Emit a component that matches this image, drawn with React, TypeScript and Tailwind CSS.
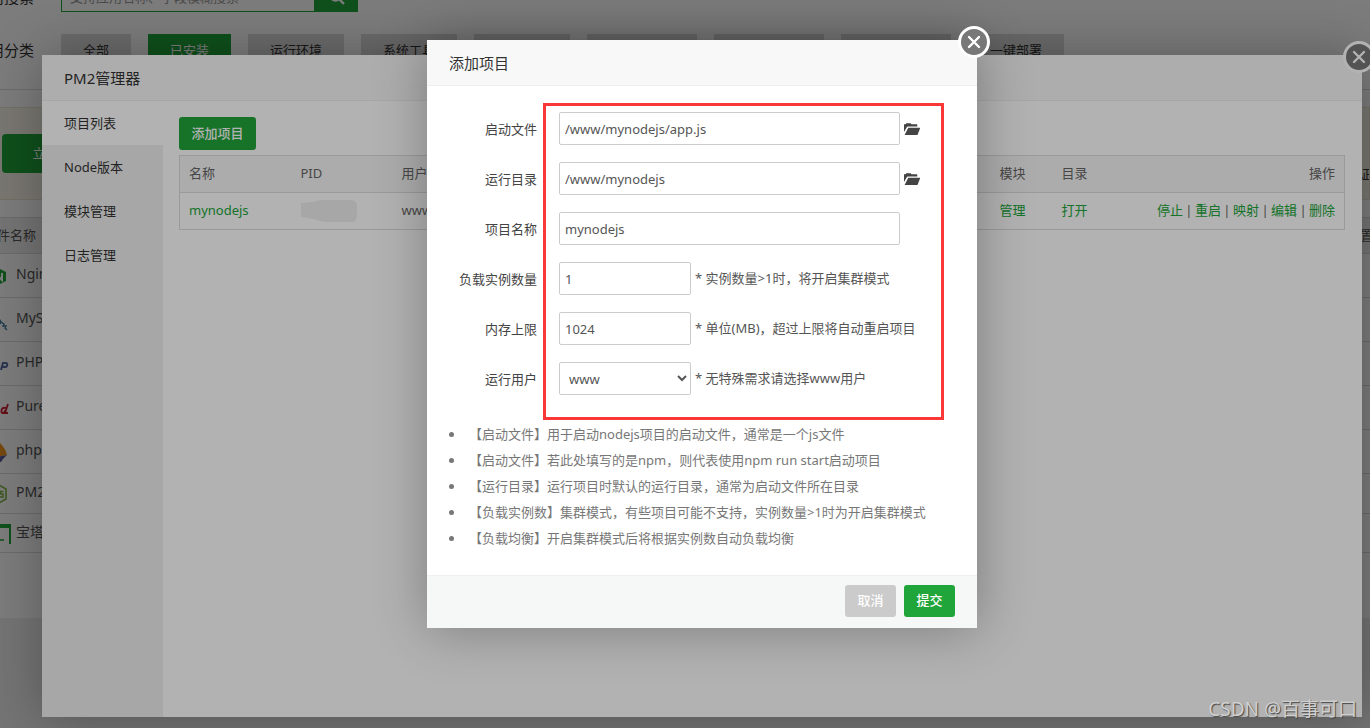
import type { ReactNode } from "react";

const categories = [
  { name: "全部" },
  { name: "已安装", active: true },
  { name: "运行环境" },
  { name: "系统工具" },
  { name: "宝塔插件" },
  { name: "专业版插件", wide: true },
  { name: "企业版插件", wide: true },
  { name: "第三方应用", wide: true },
  { name: "一键部署" },
];

const menus = ["项目列表", "Node版本", "模块管理", "日志管理"];

const actions = ["停止", "重启", "映射", "编辑", "删除"];

const tips = [
  "【启动文件】用于启动nodejs项目的启动文件，通常是一个js文件",
  "【启动文件】若此处填写的是npm，则代表使用npm run start启动项目",
  "【运行目录】运行项目时默认的运行目录，通常为启动文件所在目录",
  "【负载实例数】集群模式，有些项目可能不支持，实例数量>1时为开启集群模式",
  "【负载均衡】开启集群模式后将根据实例数自动负载均衡",
];

const software: { name: string; height: string; icon: ReactNode }[] = [
  {
    name: "Nginx",
    height: "h-11",
    icon: (
      <>
        <path d="M14 7l8 4v9l-8 4-8-4v-9z" fill="#20a53a" />
        <path d="M11 19v-7l7 7v-7" fill="none" stroke="#fff" strokeWidth="2" />
      </>
    ),
  },
  {
    name: "MySQL",
    height: "h-11",
    icon: (
      <path d="M4 8c6 0 10 3 13 9l3 2-1 2 3 0-1 2 2 2M17 17l-1 2" fill="none" stroke="#3e7a9b" strokeWidth="1.3" />
    ),
  },
  {
    name: "PHP",
    height: "h-11",
    icon: (
      <path
        d="M8 21l2-7h3c2 0 2 4-1 4H9M17 21l2-7h3c2 0 1.500 4-1 4h-3"
        fill="none"
        stroke="#5a6fa5"
        strokeWidth="2"
      />
    ),
  },
  {
    name: "Pure-Ftpd",
    height: "h-11",
    icon: (
      <path
        d="M24 11l-3 9h3M22 15c-3-1-5 1-4.500 4 1 2 3 1 4-2M14 15l-2 6"
        fill="none"
        stroke="#d02030"
        strokeWidth="1.800"
      />
    ),
  },
  {
    name: "phpMyAdmin",
    height: "h-11",
    icon: (
      <>
        <path d="M16 6c3 3 6 7 7 12l-12 2z" fill="#f0961e" />
        <path d="M6 21l17-3-4 4-2 3H9z" fill="#5a5f9a" />
      </>
    ),
  },
  {
    name: "PM2管理器",
    height: "h-10",
    icon: (
      <>
        <path d="M15 6l7 4v10l-7 4-7-4V10z" fill="none" stroke="#7cb342" strokeWidth="1.600" />
        <path d="M19.500 12.500h-3v2.500h2.500v3h-3.500" fill="none" stroke="#7cb342" strokeWidth="1.500" />
      </>
    ),
  },
  {
    name: "宝塔SSL",
    height: "h-[39px]",
    icon: (
      <>
        <path d="M4 5h23v20h-2V9H4z" fill="#20a53a" />
        <path d="M12 21h8" stroke="#20a53a" strokeWidth="1.500" />
      </>
    ),
  },
];

function CloseButton() {
  return (
    <button
      type="button"
      aria-label="关闭"
      className="absolute -top-[14px] -right-[13px] flex size-8 items-center justify-center rounded-full border-3 border-white bg-[#787878]"
    >
      <svg viewBox="0 0 14 14" className="size-[14px]" fill="none" stroke="#fff" strokeWidth="2.4" strokeLinecap="round">
        <path d="M2 2l10 10M12 2L2 12" />
      </svg>
    </button>
  );
}

function FolderButton({ label }: { label: string }) {
  return (
    <button type="button" aria-label={label} className="ml-1">
      <svg viewBox="0 0 16 12" className="h-3 w-4" fill="#444">
        <path d="M0 9V1.200h1.600L2.200.2h4.600l.6 1h5.300c.4 0 .6.3.6.7V3.600H4.200c-.8 0-1.400.4-1.700 1.100z" />
        <path d="M4.300 4.700h11.200c.5 0 .6.3.5.7l-2.300 6c-.1.4-.4.600-.8.600H.600z" />
      </svg>
    </button>
  );
}

function Field({ id, label, children }: { id: string; label: string; children: ReactNode }) {
  return (
    <div className="flex h-[33px] items-center">
      <label htmlFor={id} className="mr-[22px] w-[110px] pt-0.5 text-right text-[#444]">
        {label}
      </label>
      {children}
    </div>
  );
}

function StorePage() {
  return (
    <div className="-ml-[26px] w-[calc(100%+46px)] bg-white pb-[65px]">
      <div className="-mt-[18px] flex h-[30px] items-center">
        <label htmlFor="search" className="w-[87px] text-[15px]">应用搜索</label>
        <input
          id="search"
          placeholder="支持应用名称、字段模糊搜索"
          className="h-[30px] w-[254px] border border-[#20a53a] pl-2 placeholder:text-[#999]"
        />
        <button type="button" aria-label="搜索" className="flex h-[30px] w-[43px] items-center justify-center bg-[#20a53a]">
          <svg viewBox="0 0 16 16" className="size-4" fill="none" stroke="#fff" strokeWidth="2.400">
            <circle cx="6.500" cy="6.500" r="5" />
            <path d="M10 10l5 5" />
          </svg>
        </button>
      </div>
      <div className="mt-[22px] flex h-[56px] items-start border-b border-[#ddd]">
        <span className="w-[87px] text-[15px] leading-[33px]">应用分类</span>
        <div className="flex gap-[17px]">
          {categories.map((item) => (
            <button
              type="button"
              key={item.name}
              className={`h-[33px] ${item.wide ? "w-[110px]" : "px-[22px]"} ${
                item.active ? "bg-[#20a53a] text-white" : "bg-[#dcdcdc]"
              }`}
            >
              {item.name}
            </button>
          ))}
        </div>
      </div>
      <div className="mt-[17px] mr-5 flex h-[93px] items-center justify-between border border-[#eee6d2] bg-[#f9f5e8] pl-[27px]">
        <button type="button" className="h-[39px] w-[152px] rounded bg-[#20a53a] text-white">
          立即升级专业版
        </button>
        <span className="mt-[43px] w-[11px] overflow-hidden whitespace-nowrap">证</span>
      </div>
      <table className="mt-[17px] w-full border border-[#ddd]">
        <thead>
          <tr className="h-9 border-b border-[#ddd] bg-[#f0f0f0] text-left text-[#555]">
            <th className="pl-[9px] font-normal">软件名称</th>
            <th className="w-[42px] font-normal">位置</th>
          </tr>
        </thead>
        <tbody>
          {software.map((item) => (
            <tr key={item.name} className={`${item.height} border-b border-[#ddd]`}>
              <td className="pb-[3px] pl-[9px]">
                <div className="flex items-center gap-[6px] text-sm text-[#555]">
                  <svg viewBox="0 0 26 26" className="size-[26px] overflow-visible">{item.icon}</svg>
                  {item.name}
                </div>
              </td>
              <td />
            </tr>
          ))}
        </tbody>
      </table>
    </div>
  );
}

function ManagerWindow() {
  return (
    <section className="relative flex h-[662px] w-[1320px] shrink-0 flex-col bg-white shadow-[1px_1px_50px_rgba(0,0,0,0.3)]">
      <h2 className="h-[46px] shrink-0 border-b border-[#eee] bg-[#f8f8f8] pl-[22px] text-[15px] leading-[46px]">
        PM2管理器
      </h2>
      <div className="flex flex-1">
        <nav className="w-[121px] bg-[#f0f0f0]">
          {menus.map((menu, index) => (
            <a
              key={menu}
              href="#"
              className={`block h-11 pl-[22px] leading-[44px] ${index === 0 ? "bg-white" : ""}`}
            >
              {menu}
            </a>
          ))}
        </nav>
        <div className="flex-1 pt-4 pr-[17px] pl-4">
          <button type="button" className="h-[33px] w-[77px] rounded-[3px] bg-[#20a53a] font-medium text-white">
            添加项目
          </button>
          <table className="mt-[5px] w-full table-fixed border border-[#ddd] text-left text-[#666]">
            <thead>
              <tr className="h-[37px] border-b border-[#ddd] bg-[#f6f6f6]">
                <th className="w-[111px] pl-[9px] font-normal">名称</th>
                <th className="w-[101px] pl-[10px] font-normal">PID</th>
                <th className="pl-[10px] font-normal">用户</th>
                <th className="w-[62px] pl-[10px] font-normal">模块</th>
                <th className="w-[62px] pl-[10px] font-normal">目录</th>
                <th className="w-[231px] pr-[9px] text-right font-normal">操作</th>
              </tr>
            </thead>
            <tbody>
              <tr className="h-[37px]">
                <td className="pl-[9px]">
                  <a href="#" className="text-[#20a53a]">mynodejs</a>
                </td>
                <td className="pl-[9px]">
                  <svg viewBox="0 0 58 24" className="h-6 w-[58px]" fill="#f0f0f0">
                    <path d="M1 4l12-1 8-2h31q5 1 5 5v12q-1 5-5 5l-27 0-12-3-12-2z" />
                  </svg>
                </td>
                <td className="pl-[10px]">www</td>
                <td className="pl-[10px]">
                  <a href="#" className="text-[#20a53a]">管理</a>
                </td>
                <td className="pl-[10px]">
                  <a href="#" className="text-[#20a53a]">打开</a>
                </td>
                <td className="pr-[9px]">
                  <div className="flex justify-end">
                    {actions.map((action, index) => (
                      <span key={action} className="flex">
                        {index > 0 && <span className="w-3 text-center">|</span>}
                        <a href="#" className="text-[#20a53a]">{action}</a>
                      </span>
                    ))}
                  </div>
                </td>
              </tr>
            </tbody>
          </table>
        </div>
      </div>
      <CloseButton />
    </section>
  );
}

function AddProjectDialog() {
  const inputClass = "h-[33px] rounded-[2px] border border-[#ccc] bg-white pl-[5px] text-[#555]";

  return (
    <form className="relative w-[550px] shrink-0 bg-white shadow-[1px_1px_50px_rgba(0,0,0,0.3)]">
      <h2 className="h-[46px] border-b border-[#eee] bg-[#f8f8f8] pl-[22px] text-[15px] leading-[46px]">
        添加项目
      </h2>
      <div className="flex flex-col gap-[17px] pt-[26px] text-[#555]">
        <Field id="script" label="启动文件">
          <input id="script" defaultValue="/www/mynodejs/app.js" className={`${inputClass} w-[341px]`} />
          <FolderButton label="选择启动文件" />
        </Field>
        <Field id="path" label="运行目录">
          <input id="path" defaultValue="/www/mynodejs" className={`${inputClass} w-[341px]`} />
          <FolderButton label="选择运行目录" />
        </Field>
        <Field id="name" label="项目名称">
          <input id="name" defaultValue="mynodejs" className={`${inputClass} w-[341px]`} />
        </Field>
        <Field id="count" label="负载实例数量">
          <input id="count" defaultValue="1" className={`${inputClass} w-[132px]`} />
          <span className="ml-1">* 实例数量&gt;1时，将开启集群模式</span>
        </Field>
        <Field id="memory" label="内存上限">
          <input id="memory" defaultValue="1024" className={`${inputClass} w-[132px]`} />
          <span className="ml-1">* 单位(MB)，超过上限将自动重启项目</span>
        </Field>
        <Field id="user" label="运行用户">
          <select id="user" className={`${inputClass} w-[132px]`}>
            <option>www</option>
            <option>root</option>
          </select>
          <span className="ml-1">* 无特殊需求请选择www用户</span>
        </Field>
      </div>
      <ul className="mt-[26px] mb-6 list-disc pl-[38px] leading-[26px] text-[#777]">
        {tips.map((tip) => (
          <li key={tip} className="pl-1">{tip}</li>
        ))}
      </ul>
      <div className="flex h-[53px] items-center justify-end gap-2 border-t border-[#edf1f2] bg-[#f6f8f8] pr-[22px] pb-0.5">
        <button type="button" className="h-8 w-[51px] rounded-[3px] bg-[#cbcbcb] font-medium text-white">
          取消
        </button>
        <button type="submit" className="h-8 w-[51px] rounded-[3px] bg-[#20a53a] font-medium text-white">
          提交
        </button>
      </div>
      <CloseButton />
      <div className="pointer-events-none absolute top-[63px] left-[116px] h-[317px] w-[401px] border-3 border-[#fb3838]" />
    </form>
  );
}

export default function App() {
  return (
    <div className="relative h-screen overflow-hidden bg-[#f0f0f0] font-['Noto_Sans','Noto_Sans_CJK_SC',sans-serif] text-[13px] text-[#333]">
      <StorePage />
      <div className="absolute inset-0 flex items-start justify-center overflow-hidden bg-black/30 pt-[55px] pl-[34px]">
        <ManagerWindow />
      </div>
      <div className="absolute inset-0 flex items-start justify-center overflow-hidden bg-black/30 pt-10 pl-[34px]">
        <AddProjectDialog />
      </div>
      <span className="absolute right-[13px] bottom-[5px] text-[19px] leading-7 text-[#d0d0d0] [text-shadow:1px_1px_1px_#444]">
        CSDN @百事可口
      </span>
    </div>
  );
}
